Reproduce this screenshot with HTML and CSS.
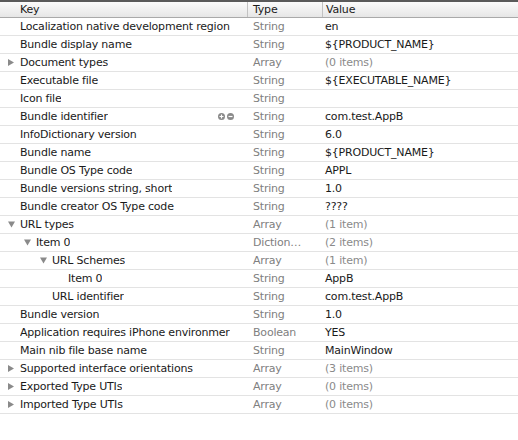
FILE: index.html
```html
<!DOCTYPE html>
<html>
<head>
<meta charset="utf-8">
<link rel="stylesheet" href="styles.css">
</head>
<body>
<div class="plist">
  <div class="head">
    <div class="hc hkey">Key</div>
    <div class="hc htype">Type</div>
    <div class="hc hval">Value</div>
  </div>

  <div class="row"><div class="key l0"><span class="sp"></span><span class="kt">Localization native development region</span></div><div class="type">String</div><div class="val">en</div></div>
  <div class="row"><div class="key l0"><span class="sp"></span><span class="kt">Bundle display name</span></div><div class="type">String</div><div class="val">${PRODUCT_NAME}</div></div>
  <div class="row"><div class="key l0"><svg class="tri" width="12" height="9" viewBox="0 0 12 9"><polygon points="0,1 6,4.5 0,8"/></svg><span class="kt">Document types</span></div><div class="type">Array</div><div class="val dim">(0 items)</div></div>
  <div class="row"><div class="key l0"><span class="sp"></span><span class="kt">Executable file</span></div><div class="type">String</div><div class="val">${EXECUTABLE_NAME}</div></div>
  <div class="row"><div class="key l0"><span class="sp"></span><span class="kt">Icon file</span></div><div class="type">String</div><div class="val"></div></div>
  <div class="row"><div class="key l0"><span class="sp"></span><span class="kt">Bundle identifier</span>
    <span class="btns">
      <svg width="7" height="7" viewBox="0 0 7 7"><circle cx="3.5" cy="3.5" r="3.5" fill="#8a8a8a"/><path d="M1.5 3.5h4M3.5 1.5v4" stroke="#fff" stroke-width="1.2"/></svg>
      <svg width="7" height="7" viewBox="0 0 7 7"><circle cx="3.5" cy="3.5" r="3.5" fill="#8a8a8a"/><path d="M1.5 3.5h4" stroke="#fff" stroke-width="1.2"/></svg>
    </span></div><div class="type">String</div><div class="val">com.test.AppB</div></div>
  <div class="row"><div class="key l0"><span class="sp"></span><span class="kt">InfoDictionary version</span></div><div class="type">String</div><div class="val">6.0</div></div>
  <div class="row"><div class="key l0"><span class="sp"></span><span class="kt">Bundle name</span></div><div class="type">String</div><div class="val">${PRODUCT_NAME}</div></div>
  <div class="row"><div class="key l0"><span class="sp"></span><span class="kt">Bundle OS Type code</span></div><div class="type">String</div><div class="val">APPL</div></div>
  <div class="row"><div class="key l0"><span class="sp"></span><span class="kt">Bundle versions string, short</span></div><div class="type">String</div><div class="val">1.0</div></div>
  <div class="row"><div class="key l0"><span class="sp"></span><span class="kt">Bundle creator OS Type code</span></div><div class="type">String</div><div class="val">????</div></div>
  <div class="row"><div class="key l0"><svg class="tri" width="12" height="9" viewBox="0 0 12 9"><polygon points="0,1.5 7,1.5 3.5,7.5"/></svg><span class="kt">URL types</span></div><div class="type">Array</div><div class="val dim">(1 item)</div></div>
  <div class="row"><div class="key l1"><svg class="tri" width="12" height="9" viewBox="0 0 12 9"><polygon points="0,1.5 7,1.5 3.5,7.5"/></svg><span class="kt">Item 0</span></div><div class="type">Diction…</div><div class="val dim">(2 items)</div></div>
  <div class="row"><div class="key l2"><svg class="tri" width="12" height="9" viewBox="0 0 12 9"><polygon points="0,1.5 7,1.5 3.5,7.5"/></svg><span class="kt">URL Schemes</span></div><div class="type">Array</div><div class="val dim">(1 item)</div></div>
  <div class="row"><div class="key l3"><span class="sp"></span><span class="kt">Item 0</span></div><div class="type">String</div><div class="val">AppB</div></div>
  <div class="row"><div class="key l2"><span class="sp"></span><span class="kt">URL identifier</span></div><div class="type">String</div><div class="val">com.test.AppB</div></div>
  <div class="row"><div class="key l0"><span class="sp"></span><span class="kt">Bundle version</span></div><div class="type">String</div><div class="val">1.0</div></div>
  <div class="row"><div class="key l0"><span class="sp"></span><span class="kt">Application requires iPhone environmer</span></div><div class="type">Boolean</div><div class="val">YES</div></div>
  <div class="row"><div class="key l0"><span class="sp"></span><span class="kt">Main nib file base name</span></div><div class="type">String</div><div class="val">MainWindow</div></div>
  <div class="row"><div class="key l0"><svg class="tri" width="12" height="9" viewBox="0 0 12 9"><polygon points="0,1 6,4.5 0,8"/></svg><span class="kt">Supported interface orientations</span></div><div class="type">Array</div><div class="val dim">(3 items)</div></div>
  <div class="row"><div class="key l0"><svg class="tri" width="12" height="9" viewBox="0 0 12 9"><polygon points="0,1 6,4.5 0,8"/></svg><span class="kt">Exported Type UTIs</span></div><div class="type">Array</div><div class="val dim">(0 items)</div></div>
  <div class="row"><div class="key l0"><svg class="tri" width="12" height="9" viewBox="0 0 12 9"><polygon points="0,1 6,4.5 0,8"/></svg><span class="kt">Imported Type UTIs</span></div><div class="type">Array</div><div class="val dim">(0 items)</div></div>
</div>
</body>
</html>
```

FILE: styles.css
```css
html, body {
  margin: 0;
  padding: 0;
  background: #fff;
}
.plist {
  width: 518px;
  font-family: "DejaVu Sans", "Liberation Sans", sans-serif;
  font-size: 11px;
  letter-spacing: -0.2px;
  color: #1a1a1a;
}
.head {
  display: grid;
  grid-template-columns: 248px 75px 1fr;
  height: 15px;
  border-top: 2px solid #5a5a5a;
  border-bottom: 1px solid #a9a9a9;
  background: linear-gradient(#fbfbfb, #e6e6e6);
  line-height: 15px;
}
.hc {
  overflow: hidden;
  white-space: nowrap;
}
.hkey { padding-left: 20px; border-right: 1px solid #c2c2c2; }
.htype { padding-left: 5px; border-right: 1px solid #c2c2c2; }
.hval { padding-left: 3px; }
.row {
  display: grid;
  grid-template-columns: 249px 75px 1fr;
  height: 17px;
  line-height: 17px;
  border-bottom: 1px solid #e3e3e3;
  white-space: nowrap;
}
.key {
  display: flex;
  align-items: center;
  overflow: hidden;
  padding-left: 8px;
}
.l1 { padding-left: 24px; }
.l2 { padding-left: 40px; }
.l3 { padding-left: 56px; }
.sp { flex: 0 0 12px; }
.tri { flex: 0 0 12px; fill: #8a8a8a; }
.kt {
  flex: 0 1 auto;
  overflow: hidden;
  min-width: 0;
}
.btns {
  display: flex;
  gap: 2px;
  margin-left: auto;
  margin-right: 15px;
}
.btns svg { display: block; }
.type {
  color: #808080;
  padding-left: 4px;
  overflow: hidden;
}
.val { padding-left: 1px; }
.dim { color: #8a8a8a; }
```
